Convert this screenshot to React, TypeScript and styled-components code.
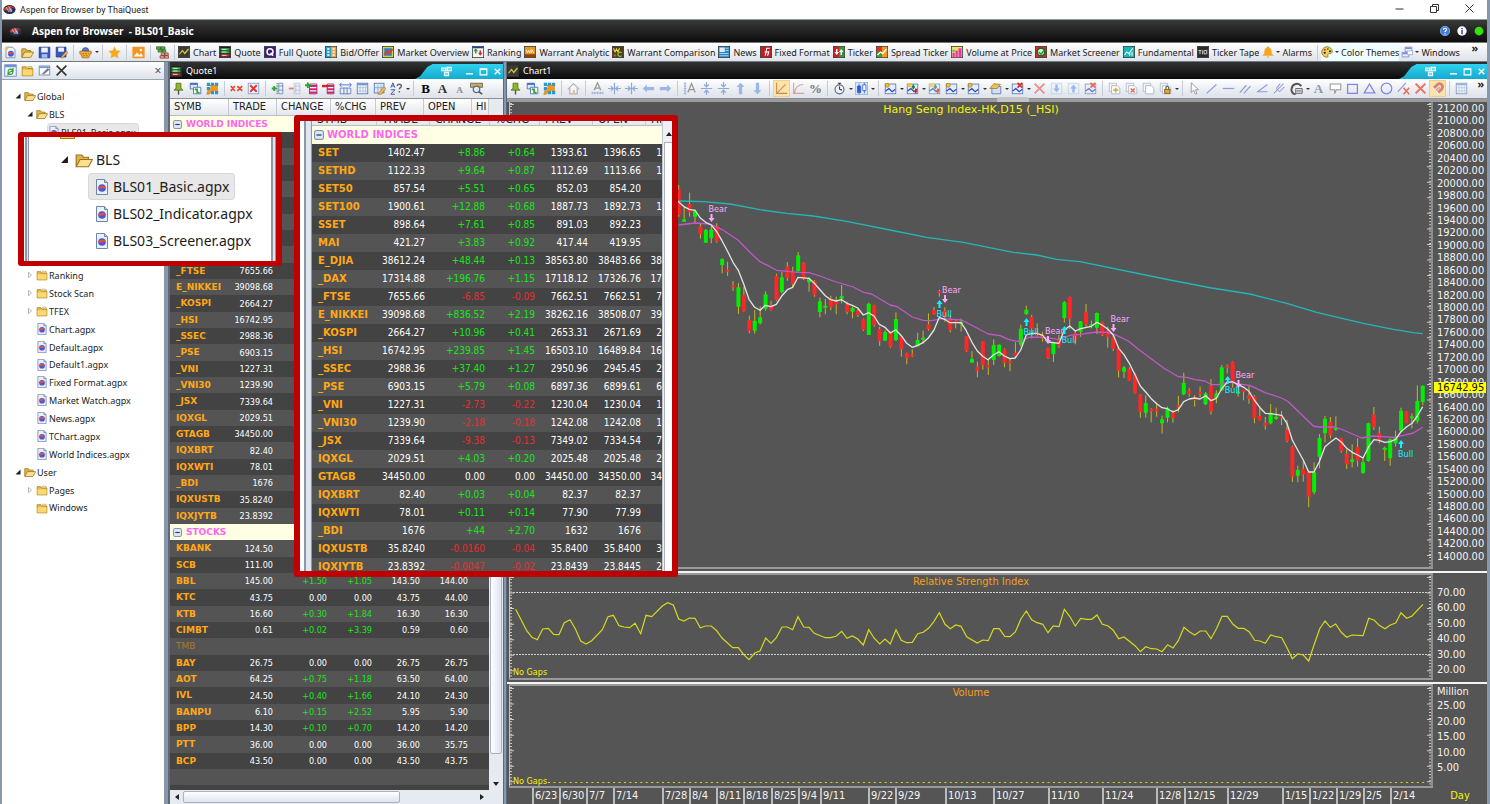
import React from "react";
import styled, { createGlobalStyle, css } from "styled-components";

const UI = `"Noto Sans", "Open Sans", sans-serif`;
const DATA = `"DejaVu Sans Condensed", "DejaVu Sans", sans-serif`;
const WIDE = `"DejaVu Sans", Verdana, sans-serif`;

const Global = createGlobalStyle`
  *, *::before, *::after { box-sizing: border-box; }
  html, body { margin: 0; height: 100%; overflow: hidden; background: #55606e; }
  #root { height: 100%; }
  button { font: inherit; color: inherit; border: 0; padding: 0; background: none; }
  ul { list-style: none; margin: 0; padding: 0; }
`;

/* ---------- icons ---------- */

const tile = (fill: string, body: React.ReactNode) => (
  <>
    <rect x="0.5" y="0.5" width="15" height="15" fill={fill} stroke="#333" />
    {body}
  </>
);

const chartTile = (badge?: React.ReactNode) => (
  <>
    <rect x="1.5" y="2.5" width="13" height="12" fill="#e6eefc" stroke="#5b74a8" />
    <path d="M2 11l4-3 4 4 4-3" fill="none" stroke="#2c46c8" strokeWidth="1.5" />
    {badge}
  </>
);

const pageGear = (badge?: React.ReactNode) => (
  <>
    <rect x="1.5" y="1.5" width="9" height="10" fill="#f2f4f8" stroke="#b4bccb" />
    <path d="M4.500 4.500h7l3 3v7h-10z" fill="#fff" stroke="#a4afc2" />
    {badge}
  </>
);

const glyphs: Record<string, React.ReactNode> = {
  logo: (
    <>
      <ellipse cx="8" cy="8" rx="7.500" ry="5.500" fill="#2a2f45" />
      <path d="M1 8c2-5 11-6 14-1-3-2-5-2-7 0s-5 3-7 1z" fill="#d8432e" />
      <circle cx="9" cy="8.500" r="2.500" fill="#6c8fe0" />
      <path d="M4 5l3 6M7 4l4 7" stroke="#f3d3c8" strokeWidth="0.8" />
    </>
  ),
  page: (
    <>
      <path d="M2.500 0.500h8l3 3v12h-11z" fill="#e9f0fa" stroke="#6d86ad" />
      <path d="M10.500 0.500v3h3" fill="#b8c9e4" stroke="#6d86ad" />
      <circle cx="8" cy="9" r="3.800" fill="#4b55d8" />
      <path d="M3.500 9c2-3 7-3 9 0-3-1-6 2-9 0z" fill="#e2503a" />
    </>
  ),
  folder: (
    <>
      <path d="M1.500 3.500h5l1.500 2h6.500v9h-13z" fill="#e9b93c" stroke="#a87c1b" />
      <path d="M2 7h12v7H2z" fill="#f8d974" />
      <path d="M8.500 3h5v2h-4z" fill="#fff3c4" stroke="#a87c1b" strokeWidth="0.600" />
    </>
  ),
  folderOpen: (
    <>
      <path d="M1 13.500V3.500h5l1.500 2H12v3" fill="#e2b24a" stroke="#9a7420" />
      <path d="M1 14l3.500-6.500H15.500L12 14z" fill="#fbe08c" stroke="#9a7420" />
    </>
  ),
  newPage: (
    <>
      <path d="M2.500 1.500h8l3 3v10h-11z" fill="#f1f6fd" stroke="#6d86ad" />
      <circle cx="8.500" cy="9.500" r="3.600" fill="#4b55d8" />
      <path d="M4.500 9.500c2-3 6-3 8 0-3-1-5 2-8 0z" fill="#e2503a" />
      <circle cx="3" cy="3" r="2" fill="#f6c433" />
    </>
  ),
  save: (
    <>
      <path d="M1.500 1.500h13v13h-13z" fill="#3558c0" stroke="#22378a" />
      <rect x="4" y="2" width="8" height="6" fill="#eef3fb" />
      <rect x="4.500" y="10" width="7" height="4.500" fill="#a9bce8" />
    </>
  ),
  saveAs: (
    <>
      <path d="M1.500 1.500h12v12h-12z" fill="#3558c0" stroke="#22378a" />
      <rect x="4" y="2" width="7" height="5" fill="#eef3fb" />
      <path d="M7 14l7-8 2 2-7 7z" fill="#f5b84a" stroke="#8a5d10" strokeWidth="0.700" />
    </>
  ),
  basket: (
    <>
      <path d="M4 6a4 4 0 018 0z" fill="#5c7fd0" stroke="#2f4b96" />
      <path d="M1 6.500h14v3h-1l-2 5H4l-2-5H1z" fill="#f3b13a" stroke="#a76c10" />
      <path d="M4 9.500h8M5 12h6" stroke="#8c5510" strokeDasharray="2 1.500" />
    </>
  ),
  star: <path d="M8 0.500l2.300 5 5.400 .6-4 3.700 1.100 5.400L8 12.500l-4.800 2.700 1.100-5.400-4-3.700 5.400-.6z" fill="#fba81a" />,
  picture: (
    <>
      <rect x="0.500" y="1" width="15" height="14" fill="#f6951e" />
      <path d="M2 13l4-5 3 3 2-2 3 4z" fill="#fff" />
      <circle cx="11" cy="5" r="1.500" fill="#fff" />
    </>
  ),
  bricks: (
    <>
      <path d="M0.500 1h5v3h-5zM6 1h5v3H6zM2.500 4.500h5v3h-5zM8 4.500h4v3H8z" fill="#5fb04a" stroke="#1f5a18" strokeWidth="0.800" />
      <path d="M6.500 8.500h4v3h-4zM11 8.500h4v3h-4zM5 12h5v3H5zM10.500 12h5v3h-5z" fill="#f0a890" stroke="#6d2a1c" strokeWidth="0.800" />
    </>
  ),
  tChart: tile("#3b3b36", <path d="M2 11l4-5 3 4 5-6" fill="none" stroke="#d7cf38" strokeWidth="1.600" />),
  tQuote: tile(
    "#1d1d1d",
    <>
      <path d="M2 3h12v3H2zM2 7h12v2.500H2z" fill="#35b345" />
      <path d="M2 11h12v3H2z" fill="#c23434" />
      <path d="M4 4.500h6M4 8h6M4 12.500h6" stroke="#fff" />
    </>
  ),
  tFull: tile(
    "#3c1a78",
    <>
      <circle cx="8" cy="7.500" r="4" fill="none" stroke="#fff" strokeWidth="2" />
      <path d="M9 9l3 4" stroke="#fff" strokeWidth="2" />
    </>
  ),
  tBid: tile(
    "#2a9ec0",
    <>
      <path d="M8 1h7v14H8z" fill="#f0a030" />
      <path d="M3 4h3M3 8h3M3 12h3M10 4h3M10 8h3M10 12h3" stroke="#fff" strokeWidth="2" />
    </>
  ),
  tOverview: tile(
    "#b7df3a",
    <>
      <rect x="3" y="3" width="10" height="10" fill="#2f7ed0" />
      <path d="M3 12l4-5 3 3 4-6" stroke="#e83a2a" strokeWidth="2.500" fill="none" />
    </>
  ),
  tRank: tile(
    "#f4f4f4",
    <>
      <path d="M5 3l3 4H6v3H4V7H2z" fill="#1f9e35" />
      <path d="M11 13l3-4h-2V6h-2v3H8z" fill="#d22" />
      <path d="M1 1h14v2H1z" fill="#1d3f94" />
    </>
  ),
  tWA: tile(
    "#e39a1c",
    <>
      <path d="M1 11h14v4H1z" fill="#8f3f10" />
      <path d="M3 5l1.500 4L6 6l1.500 3L9 5M9.500 9.500L11 5l2 4.500" stroke="#fff" fill="none" />
    </>
  ),
  tWC: tile(
    "#4d3a18",
    <>
      <path d="M2 3l2 5 2-4 2 4 2-5" stroke="#f0d03a" strokeWidth="1.500" fill="none" />
      <path d="M13 9c-3-2-5 0-5 2s2 4 5 2" stroke="#6fd04a" strokeWidth="1.700" fill="none" />
      <path d="M2 11h4v3H2z" fill="#d04a2a" />
    </>
  ),
  tNews: tile(
    "#2b86c4",
    <>
      <path d="M2 2h7v6H2z" fill="#fff" opacity="0.85" />
      <path d="M10 3h4M10 6h4M2 10h12M2 13h12" stroke="#cfe8f8" />
    </>
  ),
  tFixed: tile("#c01c22", <path d="M7 13l2-10h4M6 8h5M10 13l2-6" stroke="#fff" strokeWidth="1.500" fill="none" />),
  tTicker: tile(
    "#c8202a",
    <>
      <path d="M8 1h7v14H8z" fill="#2d9a36" />
      <path d="M5 12L2 8h2V4h2v4h2zM11 4l3 4h-2v4h-2V8H8z" fill="#fff" />
    </>
  ),
  tSpread: tile(
    "#e0341c",
    <>
      <path d="M8 1h7v14H8z" fill="#ef9a1e" />
      <path d="M1 8h7v7H1z" fill="#2ca53a" />
      <path d="M2 12l4-4 3 2 5-6" stroke="#fff" strokeWidth="1.800" fill="none" />
    </>
  ),
  tVolume: tile(
    "#f7e04a",
    <>
      <path d="M2 9h3v6H2zM6 6h3v9H6zM10 3h4v12h-4z" fill="#e335b8" />
      <path d="M2 5h3v3H2z" fill="#3fb6e8" />
    </>
  ),
  tScreener: tile(
    "#d22b20",
    <>
      <circle cx="8" cy="8" r="5" fill="#e8f4e8" stroke="#176b22" strokeWidth="2" />
      <path d="M5 8l3 3 4-5" stroke="#1c9a30" strokeWidth="2" fill="none" />
    </>
  ),
  tFund: tile("#18b6b6", <path d="M2 12l3-4 3 2 5-7M9 13v-3M12 13V8" stroke="#fff" strokeWidth="1.400" fill="none" />),
  tTape: tile("#2b2b2b", <path d="M2 6h4M4 6v5M7.500 5.500V11M12 6H9.500v4.500H12M13 5v6" stroke="#ddd" strokeWidth="1.200" fill="none" />),
  bell: <path d="M8 0.500c1 0 1.500.5 1.500 1.500 3 1 3.500 4 3.500 8l2.500 3H.5L3 10c0-4 .5-7 3.500-8C6.500 1 7 .5 8 .5zM6 14h4l-2 2z" fill="#f6a51e" />,
  palette: (
    <>
      <path d="M8 1a7 7 0 100 14c2 0 1-2 1-3s1-2 3-2 3-1 3-3c0-3-3-6-7-6z" fill="#f0d060" stroke="#8a6a18" />
      <circle cx="5" cy="5" r="1.400" fill="#c33" />
      <circle cx="9" cy="4" r="1.400" fill="#2a2" />
      <circle cx="12" cy="7" r="1.300" fill="#222" />
      <circle cx="5" cy="9" r="1.400" fill="#222" />
    </>
  ),
  windowsStack: (
    <>
      <path d="M5.500 1.500h9v6h-9zM1.500 8.500h9v6h-9z" fill="#eaf1fc" stroke="#6b86b8" />
      <path d="M6 2h8v2H6zM2 9h8v2H2z" fill="#6f92d6" />
      <path d="M8.500 6.500h7v5h-7z" fill="#fff" stroke="#8fa5cb" />
    </>
  ),
  refresh: (
    <>
      <rect x="1" y="1" width="14" height="14" fill="#f6faff" stroke="#5c7cb8" />
      <path d="M1 1h14v3H1z" fill="#6f95d8" />
      <path d="M5 9a3 3 0 015-2l1-1v3H8M11 10a3 3 0 01-5 2l-1 1v-3h3" fill="none" stroke="#2c9a2c" strokeWidth="1.500" />
    </>
  ),
  edit: (
    <>
      <rect x="1.500" y="2.500" width="13" height="11" fill="#fff" stroke="#5c7cb8" />
      <path d="M2 3h12v2H2z" fill="#6f95d8" />
      <path d="M5 12l7-7 2 2-7 6z" fill="#777" />
    </>
  ),
  cross: <path d="M2 2l12 12M14 2L2 14" stroke="#333" strokeWidth="2" />,
  pin: (
    <>
      <path d="M5 1.500h6v6l2.500 2.500h-11L5 7.500z" fill="#8fb829" stroke="#4f6e12" />
      <path d="M8 10v5.500" stroke="#555" strokeWidth="1.800" />
    </>
  ),
  cascade: (
    <>
      <path d="M1.500 1.500h9v7h-9z" fill="#dfeafc" stroke="#3f66b8" />
      <path d="M1.500 2.500h9" stroke="#3f66b8" strokeWidth="2" />
      <path d="M5.500 6.500h9v8h-9z" fill="#fff" stroke="#3f66b8" />
      <path d="M7 9h3v4h3" fill="none" stroke="#28a428" strokeWidth="2" />
    </>
  ),
  share: (
    <>
      <path d="M1 1h4v4H1zM6 1h4v4H6zM11 1h4v4h-4zM1 6h4v4H1zM11 11h4v4h-4zM6 11h4v4H6z" fill="#1d9be0" />
      <path d="M1 15c1-5 3-7 6-7L5 4h9v8l-3-2c-3 0-5 2-7 5z" fill="#f59a1c" stroke="#a8660c" strokeWidth="0.600" />
    </>
  ),
  unlink: <path d="M1 5l5 6M6 5l-5 6M9 5l6 6M15 5L9 11" stroke="#e0482e" strokeWidth="2" />,
  clearGrid: (
    <>
      <rect x="1.500" y="1.500" width="13" height="13" fill="#eaf1fc" stroke="#7d9acb" />
      <path d="M4 4l8 8M12 4l-8 8" stroke="#e23a28" strokeWidth="2.400" />
    </>
  ),
  colAdd: (
    <>
      <path d="M9.500 1.500h5v13h-5zM9 5h6M9 10h6" fill="#e5eefb" stroke="#6d86ad" />
      <path d="M1 8h6M4 5v6" stroke="#2ba52b" strokeWidth="2.200" />
      <path d="M7.500 1v14" stroke="#555" strokeDasharray="2 1" />
    </>
  ),
  colDel: (
    <>
      <path d="M9.500 1.500h5v13h-5zM9 5h6M9 10h6" fill="#e5eefb" stroke="#9fb0cc" />
      <path d="M1 8h6" stroke="#e05050" strokeWidth="2.200" />
      <path d="M7.500 1v14" stroke="#999" strokeDasharray="2 1" />
    </>
  ),
  rowAdd: (
    <>
      <path d="M5.500 2.500h9v12h-9z" fill="#fff" stroke="#86224e" />
      <path d="M5 5h10M5 9h10M5 13h10" stroke="#c82878" strokeWidth="2.500" />
      <path d="M0 4h7M3.500 0.500v7" stroke="#2ba52b" strokeWidth="2.400" />
    </>
  ),
  rowDel: (
    <>
      <path d="M6.500 2.500h8v12h-8z" fill="#fff" stroke="#86224e" />
      <path d="M6 5h9M6 9h9M6 13h9" stroke="#c82878" strokeWidth="2.500" />
      <path d="M0 5h8" stroke="#e02020" strokeWidth="3" />
    </>
  ),
  fitCols: (
    <>
      <path d="M1.500 7.500h13v7h-13zM6 7v8M10 7v8" fill="#e5eefb" stroke="#5d7ab2" />
      <path d="M1 3.500h14M3 1L1 3.500 3 6M13 1l2 2.500L13 6" stroke="#3a62c0" fill="none" />
    </>
  ),
  grid: (
    <>
      <rect x="1.500" y="1.500" width="13" height="13" fill="#f2f6fd" stroke="#4f6ea8" />
      <path d="M2 3h12" stroke="#6f95d8" strokeWidth="2" />
      <path d="M5 4v10M8.500 4v10M12 4v10M2 7h12M2 11h12" stroke="#a9bbdc" />
    </>
  ),
  gridEdit: (
    <>
      <rect x="1.500" y="1.500" width="12" height="12" fill="#dce8fb" stroke="#4f6ea8" />
      <path d="M6 4v9M10 4v9M2 7h11" stroke="#88a2d0" />
      <path d="M6 15l7-9 3 2-7 8z" fill="#f5b84a" stroke="#8a5d10" strokeWidth="0.600" />
    </>
  ),
  sort: (
    <>
      <path d="M1 7l2.500-6L6 7M2 5h3M1 9.500h5l-5 5.500h5" stroke="#3b57a8" strokeWidth="1.200" fill="none" />
      <path d="M9 5c0-3 5-3 5 0 0 2-2.500 2-2.500 4M11.500 11v2" stroke="#666" strokeWidth="1.800" fill="none" />
    </>
  ),
  inspect: (
    <>
      <path d="M0.500 1.500h15v5h-15z" fill="#d8a850" stroke="#4f5f5f" />
      <circle cx="8" cy="9" r="4" fill="#d8ecfb" stroke="#666" strokeWidth="1.500" />
      <path d="M11 12l4 3" stroke="#555" strokeWidth="2" />
    </>
  ),
  home: (
    <>
      <path d="M1 9l7-7 7 7M3.500 8v6.500h9V8" fill="#fff" stroke="#999" strokeWidth="1.500" />
      <path d="M7 10h3v4H7z" fill="#e0b070" />
    </>
  ),
  timeAuto: (
    <>
      <path d="M4 10L8 1l4 9M5.500 7.500h5" stroke="#999" strokeWidth="1.600" fill="none" />
      <path d="M1 13.500h14M1.500 12v3M4.500 12v3M8 12v3M11.500 12v3M14.500 12v3" stroke="#8ea9da" />
    </>
  ),
  priceAuto: (
    <>
      <path d="M6 13L10.500 2 15 13M7.500 9.500h6" stroke="#999" strokeWidth="1.600" fill="none" />
      <path d="M2.500 1v14M1 1.500h3M1 5h3M1 8h3M1 11h3M1 14.500h3" stroke="#8ea9da" />
    </>
  ),
  scaleX: <path d="M8 1v14M0 8h6M10 8h6M3.500 5l3 3-3 3M12.500 5l-3 3 3 3" stroke="#8ea9da" strokeWidth="1.500" fill="none" />,
  scaleY: <path d="M1 8h14M8 0v5M8 11v5M5 3l3 3 3-3M5 13l3-3 3 3" stroke="#8ea9da" strokeWidth="1.500" fill="none" />,
  left: <path d="M1 8l5-5v3h9v4H6v3z" fill="#9db6ea" />,
  right: <path d="M15 8l-5-5v3H1v4h9v3z" fill="#9db6ea" />,
  up: <path d="M8 1l5 5h-3v9H6V6H3z" fill="#9db6ea" />,
  down: <path d="M8 15l5-5h-3V1H6v9H3z" fill="#9db6ea" />,
  diag: <path d="M2 1v13h13M3 13L13 3" stroke="#c98a52" strokeWidth="1.300" fill="none" />,
  curve: <path d="M2 1v13h13M3 13C4 7 8 3 14 3" stroke="#dba0a0" strokeWidth="1.300" fill="none" />,
  clock: (
    <>
      <circle cx="8" cy="9" r="5.500" fill="#eef3fa" stroke="#66738c" strokeWidth="1.500" />
      <path d="M8 9V5.500M8 9l3 1M6 1.500h4M8 1v2" stroke="#333" strokeWidth="1.300" />
    </>
  ),
  candles: (
    <>
      <rect x="0.500" y="0.500" width="15" height="15" fill="#dbe8fb" stroke="#9ab4de" />
      <path d="M3 5h4v8H3zM5 2v13" fill="#2f5ed0" stroke="#2f5ed0" />
      <path d="M9.500 3.500h4v7h-4zM11.500 1v2.500M11.500 10.500V14" fill="#fff" stroke="#2f5ed0" />
    </>
  ),
  indAdd: chartTile(<circle cx="4" cy="4" r="2.500" fill="#f2c12e" stroke="#8a6a10" strokeWidth="0.700" />),
  indMark: chartTile(
    <>
      <circle cx="4" cy="4" r="2.500" fill="#f2c12e" />
      <path d="M9 3v6M7 6h4" stroke="#178a28" strokeWidth="2" />
      <path d="M12 8v6M10 11h4" stroke="#d22" strokeWidth="2" />
    </>
  ),
  indDrag: (
    <>
      <path d="M3.500 5.500h11v9h-11z" fill="#cfe0f8" stroke="#5b74a8" />
      <path d="M1 8l5-6 8 1-4 5z" fill="#e9c060" stroke="#8c6a1a" strokeWidth="0.800" />
    </>
  ),
  indDel: chartTile(<path d="M8 1l6 6M14 1L8 7" stroke="#e02a1c" strokeWidth="2" />),
  redX: (
    <>
      <rect x="1" y="2" width="14" height="12" fill="#e8eefa" />
      <path d="M2 2l12 12M14 2L2 14" stroke="#ea6a5a" strokeWidth="2.200" />
    </>
  ),
  boxDown: (
    <>
      <rect x="1.500" y="1.500" width="13" height="13" fill="#eaf1fc" stroke="#b3c6e8" />
      <path d="M8 13l4-5H9.500V3h-3v5H4z" fill="#7b9fe6" />
    </>
  ),
  boxUp: (
    <>
      <rect x="1.500" y="1.500" width="13" height="13" fill="#eaf1fc" stroke="#b3c6e8" />
      <path d="M8 3l4 5H9.500v5h-3V8H4z" fill="#7b9fe6" />
    </>
  ),
  pagesAdd: pageGear(<path d="M9.500 7v6M6.500 10h6" stroke="#c9b63c" strokeWidth="2.200" />),
  pagesDel: pageGear(<path d="M7 8l5 5M12 8l-5 5" stroke="#e66a5a" strokeWidth="1.800" />),
  pages: pageGear(),
  pagesLock: pageGear(
    <>
      <rect x="7" y="9" width="6.500" height="5" fill="#e8a824" stroke="#7a5608" />
      <path d="M8.500 9V7c0-2 3.500-2 3.500 0v2" fill="none" stroke="#555" strokeWidth="1.300" />
    </>
  ),
  cursor: <path d="M4 1v12l3-3 2 5 2-1-2-4.500h4z" fill="#fff" stroke="#8a8a8a" />,
  line: <path d="M2 14L14 3" stroke="#8f9ce0" strokeWidth="1.500" />,
  hline: <path d="M1 8h14" stroke="#8f9ce0" strokeWidth="1.500" />,
  parallel: <path d="M1 13l8-9M6 14l8-9" stroke="#8f9ce0" strokeWidth="1.500" />,
  angle: <path d="M14 3L2 12h12" stroke="#8f9ce0" strokeWidth="1.500" fill="none" />,
  pitchfork: <path d="M1 14L13 2M4 8l5-6M8 12l6-6M4 8l4 4" stroke="#9a9fd8" strokeWidth="1.300" fill="none" />,
  fib: (
    <>
      <path d="M14 5c-4-5-11-3-12 3-1 4 2 7 5 7" stroke="#555" strokeWidth="2.500" fill="none" />
      <path d="M7 8h8v6H7zM8 11h6" fill="#ddd" stroke="#555" />
    </>
  ),
  bubble: <path d="M1.500 2.500h13v7H9l-2 5v-5H1.500z" fill="#fff" stroke="#999" strokeWidth="1.300" />,
  square: <rect x="2" y="3" width="12" height="11" fill="none" stroke="#8088e0" strokeWidth="1.600" />,
  triangle: <path d="M8 2.500l6.500 11h-13z" fill="none" stroke="#8088e0" strokeWidth="1.600" />,
  circle: <circle cx="8" cy="8" r="6.500" fill="none" stroke="#8088e0" strokeWidth="1.500" />,
  lineDel: (
    <>
      <path d="M1 12L11 1" stroke="#9aa0dc" strokeWidth="1.500" />
      <path d="M8 7l7 8M15 7l-7 8" stroke="#ea6a5a" strokeWidth="1.800" />
    </>
  ),
  cross2: <path d="M2 2l12 12M14 2L2 14" stroke="#ea7060" strokeWidth="2.500" />,
  magnet: (
    <>
      <path d="M3 8l5-5c4-3 8 2 5 6l-5 5" fill="none" stroke="#d88080" strokeWidth="3.400" />
      <path d="M6 10l3-3c1-1 2 0 1 1l-3 3" fill="none" stroke="#b86a6a" strokeWidth="0.800" />
      <path d="M1.500 6.500l3 3M6.500 12l3 3" stroke="#eef" strokeWidth="2" />
    </>
  ),
  dock: <path d="M1 3h6v4H1zM9 2h6v5H9zM5 9h6v5H5z" fill="#6fdcf0" stroke="#fff" strokeWidth="1.600" />,
  minimize: <path d="M2 12h12" stroke="#fff" strokeWidth="3" />,
  maximize: <path d="M2 3h12v11H2zM2 4.500h12" fill="none" stroke="#fff" strokeWidth="2" />,
  closeWhite: <path d="M3 3l10 10M13 3L3 13" stroke="#fff" strokeWidth="2.500" />,
  help: (
    <>
      <circle cx="8" cy="8" r="7.500" fill="#3f7fe0" stroke="#bcd4f8" />
      <path d="M5.500 6c0-3.500 5-3 5-.3 0 2-2.500 1.800-2.500 4M8 11.500v2" stroke="#fff" strokeWidth="1.800" fill="none" />
    </>
  ),
  info: (
    <>
      <circle cx="8" cy="8" r="7.500" fill="#fff" />
      <path d="M8 3v2M8 6.500V13" stroke="#2a50c8" strokeWidth="2.500" />
    </>
  ),
  online: <circle cx="8" cy="8" r="7" fill="#35e20c" />,
  minusBox: (
    <>
      <rect x="1" y="1" width="14" height="14" rx="2" fill="#dfe8f5" stroke="#6e86b0" strokeWidth="1.600" />
      <path d="M4 8h8" stroke="#22386c" strokeWidth="2" />
    </>
  ),
  expanded: <path d="M13 3v10H3z" fill="#1c1c1c" />,
  collapsed: <path d="M5 3l6 5-6 5z" fill="#fff" stroke="#999" strokeWidth="1.400" />,
};

const Svg = styled.svg`
  display: block;
  flex: none;
`;

const Icon = ({ name, size = 12 }: { name: string; size?: number }) => (
  <Svg width={size} height={size} viewBox="0 0 16 16" aria-hidden="true">
    {glyphs[name]}
  </Svg>
);

/* ---------- frame ---------- */

const Frame = styled.div`
  position: relative;
  height: 100vh;
  padding: 0 3px 0 2px;
  display: flex;
  flex-direction: column;
  background: #8797ad;
  font-family: ${UI};
  font-size: 9px;
  color: #1c1c1c;
  overflow: hidden;
`;

const SystemBar = styled.header`
  height: 20px;
  flex: none;
  display: flex;
  align-items: center;
  gap: 4px;
  padding-left: 1px;
  background: #fff;
  border-bottom: 1px solid #8f9c9c;
  font-family: Roboto, sans-serif;
`;

const SystemButtons = styled.div`
  margin-left: auto;
  display: flex;
  align-self: flex-start;
`;

const SystemButton = styled.button`
  width: 35px;
  height: 17px;
  display: flex;
  align-items: center;
  justify-content: center;
`;

const BrandBar = styled.div`
  height: 22px;
  flex: none;
  display: flex;
  align-items: center;
  gap: 10px;
  padding: 0 3px 0 7px;
  background: linear-gradient(#3a3a3a, #0c0c0c);
  color: #fff;
  font-size: 10px;
  font-weight: 700;
  white-space: pre;
`;

const BrandStatus = styled.div`
  margin-left: auto;
  display: flex;
  gap: 7px;
  align-items: center;
`;

const barFill = css`
  background: linear-gradient(#ffffff, #e9ecf1 60%, #dfe3ea);
`;

const MainBar = styled.nav`
  height: 20px;
  flex: none;
  display: flex;
  align-items: center;
  border-top: 1px solid #777;
  border-bottom: 1px solid #6f7780;
  ${barFill}
`;

const Divider = styled.span`
  width: 1px;
  height: 15px;
  flex: none;
  margin: 0 3px;
  background: #c6cad1;
`;

const ToolButton = styled.button<{ $menu?: boolean; $faded?: boolean; $on?: boolean }>`
  width: ${(p) => (p.$menu ? 22 : 17)}px;
  height: 17px;
  flex: none;
  display: flex;
  align-items: center;
  gap: 3px;
  padding-left: 2px;
  opacity: ${(p) => (p.$faded ? 0.7 : 1)};
  ${(p) => p.$on && css`background: #fbe3a9; box-shadow: inset 0 0 0 1px #f0cf8a;`}
`;

const Caret = styled.span`
  flex: none;
  border: 2px solid transparent;
  border-top-color: #333;
  border-bottom-width: 0;
`;

const Launch = styled.button<{ $menu?: boolean; $lit?: boolean }>`
  height: 17px;
  flex: none;
  display: flex;
  align-items: center;
  gap: ${(p) => (p.$menu ? 2 : 3)}px;
  margin-right: ${(p) => (p.$menu ? 2 : 3)}px;
  white-space: nowrap;
  ${(p) => p.$lit && css`background: #effcfd;`}
`;

const Overflow = styled.button<{ $wide?: boolean }>`
  margin-left: auto;
  width: ${(p) => (p.$wide ? 26 : 12)}px;
  flex: none;
  align-self: flex-start;
  line-height: 10px;
  font-size: 11px;
  font-weight: 700;
`;

const LetterIcon = styled.span<{ $tone?: string }>`
  width: 13px;
  text-align: center;
  font-family: "Liberation Serif", serif;
  font-size: 13px;
  line-height: 13px;
  font-weight: 700;
  color: ${(p) => p.$tone ?? "#333"};
`;

const Workspace = styled.main`
  flex: 1;
  min-height: 0;
  display: flex;
`;

/* ---------- tools ---------- */

type Tool = { icon?: string; label: string; text?: string; tone?: string; menu?: boolean; faded?: boolean; on?: boolean } | "|";

const Tools = ({ items }: { items: Tool[] }) => (
  <>
    {items.map((t, i) =>
      t === "|" ? (
        <Divider key={i} />
      ) : (
        <ToolButton key={i} aria-label={t.label} $menu={t.menu} $faded={t.faded} $on={t.on}>
          {t.icon ? <Icon name={t.icon} size={13} /> : <LetterIcon $tone={t.tone}>{t.text}</LetterIcon>}
          {t.menu && <Caret />}
        </ToolButton>
      )
    )}
  </>
);

const fileTools: Tool[] = [
  { icon: "newPage", label: "New page" },
  { icon: "folderOpen", label: "Open page" },
  { icon: "save", label: "Save" },
  { icon: "saveAs", label: "Save as" },
  "|",
  { icon: "basket", label: "Print", menu: true },
  "|",
  { icon: "star", label: "Favourite" },
  "|",
  { icon: "picture", label: "Snapshot" },
  "|",
  { icon: "bricks", label: "Arrange" },
  "|",
];

const launchers: [string, string][] = [
  ["tChart", "Chart"],
  ["tQuote", "Quote"],
  ["tFull", "Full Quote"],
  ["tBid", "Bid/Offer"],
  ["tOverview", "Market Overview"],
  ["tRank", "Ranking"],
  ["tWA", "Warrant Analytic"],
  ["tWC", "Warrant Comparison"],
  ["tNews", "News"],
  ["tFixed", "Fixed Format"],
  ["tTicker", "Ticker"],
  ["tSpread", "Spread Ticker"],
  ["tVolume", "Volume at Price"],
  ["tScreener", "Market Screener"],
  ["tFund", "Fundamental"],
  ["tTape", "Ticker Tape"],
];

const windowTools: Tool[] = [
  { icon: "pin", label: "Pin" },
  { icon: "cascade", label: "Link windows" },
  { icon: "share", label: "Export" },
  "|",
];

const quoteTools: Tool[] = [
  ...windowTools,
  { icon: "unlink", label: "Unlink" },
  { icon: "clearGrid", label: "Clear grid" },
  "|",
  { icon: "colAdd", label: "Insert column" },
  { icon: "colDel", label: "Delete column", faded: true },
  { icon: "rowAdd", label: "Insert row" },
  { icon: "rowDel", label: "Delete row" },
  { icon: "fitCols", label: "Fit columns" },
  { icon: "grid", label: "Grid" },
  { icon: "gridEdit", label: "Edit grid" },
  { icon: "sort", label: "Sort", menu: true },
  "|",
  { text: "B", label: "Bold", tone: "#000" },
  { text: "A", label: "Larger text" },
  { text: "ᴀ", label: "Smaller text", tone: "#999" },
  { icon: "inspect", label: "Find" },
];

const chartTools: Tool[] = [
  ...windowTools,
  { icon: "home", label: "Home", faded: true },
  "|",
  { icon: "timeAuto", label: "Auto scale time" },
  { icon: "scaleX", label: "Expand time" },
  { icon: "scaleX", label: "Shrink time" },
  { icon: "left", label: "Scroll left" },
  { icon: "right", label: "Scroll right" },
  "|",
  { icon: "priceAuto", label: "Auto scale price" },
  { icon: "scaleY", label: "Expand price" },
  { icon: "scaleY", label: "Shrink price" },
  { icon: "up", label: "Scroll up" },
  { icon: "down", label: "Scroll down" },
  "|",
  { icon: "diag", label: "Linear scale", on: true },
  { icon: "curve", label: "Log scale" },
  { text: "%", label: "Percent scale", tone: "#777" },
  "|",
  { icon: "clock", label: "Period", menu: true },
  { icon: "candles", label: "Chart style", menu: true },
  "|",
  { icon: "indAdd", label: "Add indicator", menu: true },
  { icon: "indMark", label: "Add signal", menu: true },
  { icon: "indMark", label: "Edit signal", faded: true },
  { icon: "indAdd", label: "Indicator template", menu: true },
  { icon: "indAdd", label: "Saved indicators", menu: true },
  { icon: "indDrag", label: "Load template", menu: true },
  { icon: "indDel", label: "Remove indicator", menu: true },
  { icon: "redX", label: "Delete pane", faded: true },
  { icon: "boxDown", label: "Move pane down", faded: true },
  { icon: "boxUp", label: "Move pane up", faded: true },
  { icon: "indDel", label: "Remove overlay", faded: true },
  "|",
  { icon: "pagesAdd", label: "Add page" },
  { icon: "pagesDel", label: "Delete page" },
  { icon: "pages", label: "Copy page" },
  { icon: "pagesLock", label: "Lock page", menu: true },
  "|",
  { icon: "cursor", label: "Select" },
  { icon: "line", label: "Trend line" },
  { icon: "hline", label: "Horizontal line" },
  { icon: "parallel", label: "Parallel lines" },
  { icon: "angle", label: "Angle" },
  { icon: "pitchfork", label: "Pitchfork" },
  { icon: "fib", label: "Fibonacci", menu: true },
  { text: "A", label: "Text", tone: "#8c9ab4" },
  { icon: "bubble", label: "Callout" },
  { icon: "square", label: "Rectangle" },
  { icon: "triangle", label: "Triangle" },
  { icon: "circle", label: "Ellipse" },
  { icon: "lineDel", label: "Delete line" },
  { icon: "cross2", label: "Delete all drawings" },
  { icon: "magnet", label: "Magnet", on: true },
  "|",
  { icon: "grid", label: "Data table", faded: true },
];

/* ---------- tree ---------- */

const Sidebar = styled.aside`
  width: 163px;
  flex: none;
  display: flex;
  flex-direction: column;
  border-right: 1px solid #8b94a3;
  background: #fff;
`;

const SidebarBar = styled.div`
  height: 18px;
  flex: none;
  display: flex;
  align-items: center;
  border-bottom: 1px solid #9aa4b3;
  ${barFill}
`;

const SidebarClose = styled.button`
  margin-left: auto;
  width: 10px;
  margin-right: 1px;
  font-size: 12px;
  line-height: 12px;
  color: #555;
`;

const Tree = styled.ul`
  padding: 7px 0 0 10px;
`;

const TreeRow = styled.li<{ $level: number }>`
  height: 18px;
  display: flex;
  align-items: center;
  padding-left: ${(p) => p.$level * 12}px;
  &:nth-child(8n) { height: 17px; }
`;

const Twist = styled.span`
  width: 12px;
  display: flex;
  justify-content: center;
`;

const TreeLabel = styled.span<{ $picked?: boolean; $big?: boolean }>`
  display: flex;
  align-items: center;
  gap: ${(p) => (p.$big ? 3 : 1)}px;
  height: ${(p) => (p.$big ? 25 : 17)}px;
  padding-right: 2px;
  border-radius: 3px;
  white-space: nowrap;
  ${(p) => p.$picked && css`background: #e8e8e8; box-shadow: 0 0 0 1px #d8d8d8;`}
  ${(p) => p.$picked && p.$big && css`margin-left: -5px; padding: 0 5px;`}
`;

type Node = { level: number; kind: "folder" | "folderOpen" | "page"; label: string; twist?: "expanded" | "collapsed"; picked?: boolean };

const treeTop: Node[] = [
  { level: 0, kind: "folderOpen", label: "Global", twist: "expanded" },
  { level: 1, kind: "folderOpen", label: "BLS", twist: "expanded" },
  { level: 2, kind: "page", label: "BLS01_Basic.agpx", picked: true },
];

const treeRest: Node[] = [
  { level: 1, kind: "folder", label: "Ranking", twist: "collapsed" },
  { level: 1, kind: "folder", label: "Stock Scan", twist: "collapsed" },
  { level: 1, kind: "folder", label: "TFEX", twist: "collapsed" },
  { level: 1, kind: "page", label: "Chart.agpx" },
  { level: 1, kind: "page", label: "Default.agpx" },
  { level: 1, kind: "page", label: "Default1.agpx" },
  { level: 1, kind: "page", label: "Fixed Format.agpx" },
  { level: 1, kind: "page", label: "Market Watch.agpx" },
  { level: 1, kind: "page", label: "News.agpx" },
  { level: 1, kind: "page", label: "TChart.agpx" },
  { level: 1, kind: "page", label: "World Indices.agpx" },
  { level: 0, kind: "folderOpen", label: "User", twist: "expanded" },
  { level: 1, kind: "folder", label: "Pages", twist: "collapsed" },
  { level: 1, kind: "folder", label: "Windows" },
];

const TreeItem = ({ node }: { node: Node }) => (
  <TreeRow $level={node.level}>
    <Twist>{node.twist && <Icon name={node.twist} size={8} />}</Twist>
    <TreeLabel $picked={node.picked}>
      <Icon name={node.kind} size={12} />
      {node.label}
    </TreeLabel>
  </TreeRow>
);

/* ---------- tool windows ---------- */

const ToolWindow = styled.section<{ $fill?: boolean }>`
  ${(p) => (p.$fill ? "flex: 1; min-width: 0;" : "width: 336px; flex: none;")}
  display: flex;
  flex-direction: column;
  margin-left: ${(p) => (p.$fill ? 2 : 3)}px;
  border-left: ${(p) => (p.$fill ? 1 : 2)}px solid #5d6878;
  border-right: ${(p) => (p.$fill ? 0 : 1)}px solid #5d6878;
`;

const WindowTitle = styled.div`
  height: 17px;
  flex: none;
  display: flex;
  align-items: center;
  gap: 4px;
  background: linear-gradient(#333, #0a0a0a);
  color: #fff;
`;

const WindowTab = styled.div`
  margin-left: auto;
  width: 88px;
  height: 15px;
  align-self: flex-end;
  display: flex;
  align-items: center;
  justify-content: flex-end;
  gap: 5px;
  padding-right: 1px;
  background: linear-gradient(#2fd3ee, #15a9cf);
  clip-path: polygon(20% 0, 100% 0, 100% 100%, 0 100%, 6% 80%, 14% 20%);
`;

const WindowButton = styled.button<{ $wide?: boolean }>`
  width: ${(p) => (p.$wide ? 19 : 9)}px;
`;

const WindowTools = styled.div`
  height: 20px;
  flex: none;
  display: flex;
  align-items: center;
  border-bottom: 1px solid #8b8f96;
  ${barFill}
`;

const TitleRow = ({ icon, name }: { icon: string; name: string }) => (
  <WindowTitle>
    <Icon name={icon} />
    {name}
    <WindowTab>
      <WindowButton $wide aria-label="Dock"><Icon name="dock" size={11} /></WindowButton>
      <WindowButton aria-label="Minimize"><Icon name="minimize" size={9} /></WindowButton>
      <WindowButton aria-label="Maximize"><Icon name="maximize" size={9} /></WindowButton>
      <WindowButton aria-label="Close"><Icon name="closeWhite" size={9} /></WindowButton>
    </WindowTab>
  </WindowTitle>
);

/* ---------- quotes ---------- */

type Quote = [sym: string, trade: string, chg: string, pct: string, prev: string, open: string, hi: string];

const indices: Quote[] = [
  ["SET", "1402.47", "+8.86", "+0.64", "1393.61", "1396.65", "1"],
  ["SETHD", "1122.33", "+9.64", "+0.87", "1112.69", "1113.66", "1"],
  ["SET50", "857.54", "+5.51", "+0.65", "852.03", "854.20", ""],
  ["SET100", "1900.61", "+12.88", "+0.68", "1887.73", "1892.73", "1"],
  ["SSET", "898.64", "+7.61", "+0.85", "891.03", "892.23", ""],
  ["MAI", "421.27", "+3.83", "+0.92", "417.44", "419.95", ""],
  ["E_DJIA", "38612.24", "+48.44", "+0.13", "38563.80", "38483.66", "38"],
  ["_DAX", "17314.88", "+196.76", "+1.15", "17118.12", "17326.76", "17"],
  ["_FTSE", "7655.66", "-6.85", "-0.09", "7662.51", "7662.51", "7"],
  ["E_NIKKEI", "39098.68", "+836.52", "+2.19", "38262.16", "38508.07", "39"],
  ["_KOSPI", "2664.27", "+10.96", "+0.41", "2653.31", "2671.69", "2"],
  ["_HSI", "16742.95", "+239.85", "+1.45", "16503.10", "16489.84", "16"],
  ["_SSEC", "2988.36", "+37.40", "+1.27", "2950.96", "2945.45", "2"],
  ["_PSE", "6903.15", "+5.79", "+0.08", "6897.36", "6899.61", "6"],
  ["_VNI", "1227.31", "-2.73", "-0.22", "1230.04", "1230.04", "1"],
  ["_VNI30", "1239.90", "-2.18", "-0.18", "1242.08", "1242.08", "1"],
  ["_JSX", "7339.64", "-9.38", "-0.13", "7349.02", "7334.54", "7"],
  ["IQXGL", "2029.51", "+4.03", "+0.20", "2025.48", "2025.48", "2"],
  ["GTAGB", "34450.00", "0.00", "0.00", "34450.00", "34350.00", "34"],
  ["IQXBRT", "82.40", "+0.03", "+0.04", "82.37", "82.37", ""],
  ["IQXWTI", "78.01", "+0.11", "+0.14", "77.90", "77.99", ""],
  ["_BDI", "1676", "+44", "+2.70", "1632", "1676", ""],
  ["IQXUSTB", "35.8240", "-0.0160", "-0.04", "35.8400", "35.8400", "3"],
  ["IQXJYTB", "23.8392", "-0.0047", "-0.02", "23.8439", "23.8445", "2"],
];

/* the magnified panel lies over the first eight rows and over all but two columns of the rest */
const indicesBehind: Quote[] = indices.map((q, i) => (i < 8 ? ["", "", "", "", "", "", ""] : [q[0], q[1], "", "", "", "", ""]));

const stocks: Quote[] = [
  ["KBANK", "124.50", "", "", "", "", ""],
  ["SCB", "111.00", "", "", "", "", ""],
  ["BBL", "145.00", "+1.50", "+1.05", "143.50", "144.00", ""],
  ["KTC", "43.75", "0.00", "0.00", "43.75", "44.00", ""],
  ["KTB", "16.60", "+0.30", "+1.84", "16.30", "16.30", ""],
  ["CIMBT", "0.61", "+0.02", "+3.39", "0.59", "0.60", ""],
  ["TMB", "", "", "", "", "", ""],
  ["BAY", "26.75", "0.00", "0.00", "26.75", "26.75", ""],
  ["AOT", "64.25", "+0.75", "+1.18", "63.50", "64.00", ""],
  ["IVL", "24.50", "+0.40", "+1.66", "24.10", "24.30", ""],
  ["BANPU", "6.10", "+0.15", "+2.52", "5.95", "5.90", ""],
  ["BPP", "14.30", "+0.10", "+0.70", "14.20", "14.20", ""],
  ["PTT", "36.00", "0.00", "0.00", "36.00", "35.75", ""],
  ["BCP", "43.50", "0.00", "0.00", "43.50", "43.75", ""],
  ["", "", "", "", "", "", ""],
  ["", "", "", "", "", "", ""],
];

const headers = ["SYMB", "TRADE", "CHANGE", "%CHG", "PREV", "OPEN", "HI"];

const Grid = styled.table<{ $big?: boolean }>`
  width: 100%;
  table-layout: fixed;
  border-collapse: separate;
  border-spacing: 0;
  font-family: ${DATA};
  font-size: ${(p) => (p.$big ? 10 : 9)}px;
  line-height: 12px;
  color: #fff;
  th, td { padding: 0; overflow: hidden; white-space: nowrap; }
  tbody tr { height: ${(p) => (p.$big ? 18 : 16)}px; }
  ${(p) => !p.$big && css`tbody tr:nth-child(3n) { height: 17px; }`}
  tbody tr:nth-child(even) { background: #434343; }
  tbody tr:nth-child(odd) { background: #545454; }
`;

const HeadCell = styled.th<{ $big?: boolean }>`
  height: ${(p) => (p.$big ? 19 : 17)}px;
  && { padding-left: ${(p) => (p.$big ? 5 : 4)}px; }
  font-size: ${(p) => (p.$big ? 12 : 11)}px;
  font-weight: 400;
  text-align: left;
  vertical-align: ${(p) => (p.$big ? "bottom" : "middle")};
  color: #222;
  background: linear-gradient(#fff, #e4e7ec);
  border-right: 1px solid #c5c9d0;
  border-bottom: 1px solid #b9bdc4;
`;

const GroupCell = styled.td<{ $big?: boolean }>`
  background: #feffe3;
  color: #ff66f0;
  font-family: ${WIDE};
  font-weight: 700;
  button { display: flex; align-items: center; gap: ${(p) => (p.$big ? 3 : 4)}px; margin-left: ${(p) => (p.$big ? 2 : 3)}px; }
`;

const SymbolCell = styled.th<{ $dim?: boolean }>`
  && { padding: 0 0 1px 6px; }
  text-align: left;
  font-family: ${WIDE};
  font-weight: ${(p) => (p.$dim ? 400 : 700)};
  color: ${(p) => (p.$dim ? "#a97a30" : "#ffa816")};
`;

const NumberCell = styled.td<{ $tone: string; $big?: boolean; $cut?: boolean }>`
  text-align: right;
  color: ${(p) => p.$tone};
  && { padding-right: ${(p) => (p.$cut ? 0 : p.$big ? 5 : 4)}px; }
`;

const toneOf = (v: string) => (v[0] === "+" ? "#19e619" : v[0] === "-" ? "#e23030" : "#fff");

const QuoteGrid = ({ big, widths, groups }: { big?: boolean; widths: number[]; groups: [string, Quote[]][] }) => (
  <Grid $big={big}>
    <colgroup>
      {widths.map((w, i) => (
        <col key={i} width={w} />
      ))}
    </colgroup>
    <thead>
      <tr>
        {headers.map((h) => (
          <HeadCell key={h} $big={big} scope="col">{h}</HeadCell>
        ))}
      </tr>
    </thead>
    <tbody>
      {groups.map(([name, rows]) => (
        <React.Fragment key={name}>
          <tr>
            <GroupCell colSpan={7} $big={big}>
              <button aria-expanded="true">
                <Icon name="minusBox" size={big ? 10 : 9} />
                {name}
              </button>
            </GroupCell>
          </tr>
          {rows.map((r, i) => (
            <tr key={i}>
              <SymbolCell scope="row" $dim={r[0] === "TMB"}>{r[0]}</SymbolCell>
              {r.slice(1).map((v, c) => (
                <NumberCell key={c} $big={big} $cut={c === 5} $tone={toneOf(v)}>{v}</NumberCell>
              ))}
            </tr>
          ))}
        </React.Fragment>
      ))}
    </tbody>
  </Grid>
);

const QuoteBody = styled.div`
  flex: 1;
  min-height: 0;
  display: grid;
  grid-template: minmax(0, 1fr) 14px / minmax(0, 1fr) 14px;
  background: #434343;
`;

const Clip = styled.div`
  overflow: hidden;
`;

const Track = styled.div<{ $across?: boolean }>`
  display: flex;
  flex-direction: ${(p) => (p.$across ? "row" : "column")};
  align-items: center;
  justify-content: space-between;
  padding: ${(p) => (p.$across ? "0 4px" : "0 0 4px")};
  background: #e6eaf1;
`;

const Thumb = styled.div<{ $across?: boolean }>`
  flex: ${(p) => (p.$across ? "0 1 217px" : "1")};
  ${(p) => (p.$across ? "height: 12px; margin: 0 auto 0 3px;" : "width: 12px; margin: 16px 0 28px;")}
  border: 1px solid #aab2c0;
  border-radius: 2px;
  background: linear-gradient(${(p) => (p.$across ? "180deg" : "90deg")}, #fff, #dde3ee);
`;

const Arrow = styled.span<{ $turn: number }>`
  border: 3px solid transparent;
  border-top: 4px solid #222;
  border-bottom: 0;
  rotate: ${(p) => p.$turn}deg;
`;

/* ---------- chart ---------- */

const ChartBody = styled.div`
  position: relative;
  flex: 1;
  min-height: 0;
  display: flex;
  flex-direction: column;
  background: #555;
  border-top: 3px solid #9b9b9b;
  font-family: ${DATA};
  font-size: 11px;
  color: #f4f4f4;
`;

const Grip = styled.span`
  position: absolute;
  top: -5px;
  left: 50%;
  width: 32px;
  height: 5px;
  border-radius: 3px 3px 0 0;
  background: #c3c3c3;
`;

const Pane = styled.div<{ $height?: number }>`
  ${(p) => (p.$height ? `height: ${p.$height}px; flex: none;` : "flex: 1; min-height: 0;")}
  display: grid;
  grid-template-columns: minmax(0, 1fr) 54px;
  padding-left: 2px;
`;

const Gutter = styled.div`
  height: 2px;
  flex: none;
  background: #f4f4f4;
`;

const Plot = styled.div<{ $first?: boolean; $last?: boolean }>`
  position: relative;
  min-height: 0;
  border-top: ${(p) => (p.$first ? 0 : 2)}px solid #999;
  border-bottom: 2px solid #999;
  margin-bottom: ${(p) => (p.$last ? 0 : 2)}px;
`;

const Canvas = styled.svg`
  display: block;
  width: 100%;
  height: 100%;
`;

const PlotTitle = styled.h2<{ $main?: boolean }>`
  position: absolute;
  top: ${(p) => (p.$main ? 1 : 0)}px;
  left: 0;
  right: 0;
  margin: 0;
  text-align: center;
  font-family: ${(p) => (p.$main ? WIDE : DATA)};
  font-size: 11px;
  line-height: 13px;
  font-weight: 400;
  color: ${(p) => (p.$main ? "#f2f20a" : "#f5a01a")};
`;

const GapNote = styled.span<{ $low?: boolean }>`
  position: absolute;
  left: 4px;
  bottom: ${(p) => (p.$low ? -1 : 0)}px;
  font-size: 9px;
  line-height: 11px;
  color: #f2f20a;
`;

const Axis = styled.div<{ $pad: string }>`
  position: relative;
  min-height: 0;
  display: flex;
  flex-direction: column;
  justify-content: space-between;
  padding: ${(p) => p.$pad};
  line-height: 12px;
`;

const AxisGroup = styled.div`
  flex: 1;
  display: flex;
  flex-direction: column;
  justify-content: space-between;
  margin-top: 2px;
`;

const LastPrice = styled.output`
  position: absolute;
  top: 60%;
  left: 1px;
  right: 1px;
  margin-top: -1px;
  height: 11px;
  line-height: 11px;
  padding-left: 3px;
  background: #ffff00;
  color: #111;
`;

const DateAxis = styled.div`
  height: 16px;
  flex: none;
  display: grid;
  grid-template-columns: minmax(0, 1fr) 54px;
  padding-left: 2px;
  line-height: 15px;
`;

const Dates = styled.div`
  display: flex;
  min-width: 0;
`;

const DateMark = styled.span<{ $span: number; $blank?: boolean }>`
  flex: ${(p) => p.$span} 1 0;
  width: 0;
  min-width: 0;
  white-space: nowrap;
  ${(p) => !p.$blank && css`box-shadow: inset 2px 0 #bbb; text-indent: 3px;`}
`;

const DayLabel = styled.span`
  text-align: center;
  color: #f2f20a;
`;

type Bar = [high: number, low: number, top: number, bottom: number, up: 0 | 1];

/* prices are held in thirds of a chart unit, measured down from each block's base */
const barsA: Bar[] = [
  [15,110,28,105,0],[80,125,118,125,1],[38,110,72,97,0],[88,130,93,110,1],[130,176,139,163,0],[147,188,150,188,1],
  [138,190,149,175,1],[130,188,137,184,0],[235,280,237,255,1],[245,288,269,275,0],[303,333,316,322,0],[309,402,322,380,1],
  [320,395,345,394,0],[407,460,420,454,0],[390,461,422,452,1],[380,433,412,430,1],[334,392,343,386,1],[362,392,376,391,0],
  [281,362,287,360,0],[275,340,292,336,1],[246,303,260,294,0],[260,323,276,313,0],[216,275,226,274,1],[247,300,248,297,0],
  [292,335,297,307,1],[300,350,302,346,0],[353,412,364,396,1],[357,403,377,382,1],[347,391,357,382,0],[350,403,364,374,0],
  [315,370,348,356,1],[365,403,373,396,0],[380,415,384,395,1],[387,411,392,405,0],[416,453,418,449,0],[368,465,371,465,1],
  [374,440,375,436,0],[440,498,447,483,0],[450,483,456,482,1],[455,503,457,500,0],[397,483,417,480,1],[467,530,470,508,0],
  [518,553,520,535,0],[508,531,523,529,0],[458,500,480,499,1],[452,490,473,479,1],[400,452,433,448,0],[381,405,390,404,0],
  [329,350,334,340,0],[382,425,392,412,0],[405,457,420,451,0],[418,445,423,429,0],[416,455,426,432,1],[468,516,469,514,0],
  [513,548,537,548,1],[545,592,560,572,0],[484,569,484,556,0],[537,585,555,562,0],[478,555,495,540,1],[493,530,494,528,1],
  [505,562,508,549,0],[535,574,544,550,0],[487,535,518,528,0],[434,500,446,494,1],[377,405,389,402,1],[405,475,411,445,0],
  [430,470,458,466,0],[455,485,465,475,0],[503,537,505,534,0],[485,546,489,522,1],[465,503,480,497,0],[363,428,367,414,1],
  [350,447,351,416,0],
];

const barsB: Bar[] = [
  [150,193,160,180,0],[123,170,124,155,1],[72,140,96,134,0],[122,145,133,138,1],[97,162,99,144,1],[125,168,127,165,0],
  [140,203,152,172,0],[165,213,171,206,0],[200,292,203,272,0],[258,294,262,275,1],[262,303,266,302,0],[278,341,285,339,0],
  [342,413,343,396,0],[346,413,369,398,1],[385,427,388,394,0],[370,410,386,394,0],[407,461,418,430,1],[380,427,385,413,1],
  [390,428,397,414,0],[348,397,376,382,0],[278,345,308,343,1],[325,350,332,341,0],[345,380,354,361,0],[320,352,335,342,0],
  [336,375,340,373,1],[297,404,317,395,0],[331,370,340,354,1],[255,333,262,331,1],[253,280,257,262,0],[244,323,245,309,0],
  [318,350,335,341,1],[330,361,330,336,0],[318,371,346,357,0],[345,430,348,414,0],[380,421,408,421,0],[411,449,428,437,0],
  [372,433,398,430,1],[383,420,410,416,1],[393,435,408,414,0],[420,487,449,483,0],[497,606,500,590,0],[557,607,570,587,1],
  [543,605,567,584,0],[572,682,575,650,0],[547,643,577,637,1],[462,565,474,530,1],[408,487,416,460,1],[411,475,426,465,0],
  [409,453,443,449,1],[474,518,475,513,0],[508,567,521,553,0],[493,562,538,546,1],[475,560,501,542,0],[535,581,547,580,1],
  [428,545,430,543,1],[381,450,404,441,0],[440,490,459,480,0],[500,543,503,510,1],[475,557,478,535,1],[452,500,470,490,1],
  [383,457,392,452,1],[393,430,394,429,0],[400,445,409,415,1],[316,430,363,424,1],[316,375,317,366,1],
];

const bars: Bar[] = [
  ...barsA,
  ...barsB.map(([h, l, t, b, u]): Bar => [h + 300, l + 300, t + 300, b + 300, u]),
];

const barX = (i: number) => 678.7 + i * 5.431;
const priceY = (v: number) => 180 + v / 3;

type Pt = [number, number];
const place = (pts: Pt[], x0: number, y0: number) => pts.map(([x, y]) => `${(x0 + x / 3).toFixed(1)},${(y0 + y / 3).toFixed(1)}`).join(" ");

const slow =
  place([[56,63],[130,65],[210,72],[300,89],[380,100],[460,108],[560,124],[690,150],[800,172],[910,187],[1060,217],[1130,225],[1190,238],[1260,245]], 660, 180) +
  " " +
  place([[330,0],[455,24],[570,42],[680,70],[770,97],[910,130],[1000,148],[1060,158],[1088,161]], 1060, 280);

const mid =
  place([[56,135],[105,129],[150,132],[185,148],[235,181],[270,217],[300,245],[330,260],[350,271],[415,277],[447,278],[480,288],[520,303],[580,321],[610,337],[635,342],[690,375],[712,380],[757,411],[790,421],[815,422],[845,416],[905,420],[945,441],[985,462],[1020,467],[1045,478],[1070,484],[1090,479],[1110,471],[1150,472],[1197,478]], 660, 180) +
  " " +
  place([[30,166],[60,163],[110,156],[140,157],[165,164],[205,183],[235,208],[310,263],[355,290],[380,292],[405,299],[435,303],[455,314],[475,314],[510,306],[535,312],[570,316],[615,338],[665,354],[685,365],[760,438],[775,441],[825,441],[850,450],[905,474],[940,468],[1000,472],[1030,466],[1060,459],[1088,442]], 1060, 280);

const fast =
  place([[53,63],[72,80],[88,88],[105,91],[121,114],[137,127],[154,135],[170,155],[186,182],[202,212],[219,247],[235,271],[251,312],[267,358],[284,382],[300,391],[316,376],[333,380],[349,373],[366,347],[382,329],[398,322],[414,292],[447,295],[463,310],[480,329],[496,347],[512,359],[528,363],[545,359],[561,370],[577,376],[593,384],[610,405],[626,398],[642,408],[658,433],[675,442],[691,459],[707,449],[724,467],[740,490],[757,502],[773,496],[789,488],[805,474],[822,450],[838,412],[854,418],[870,428],[903,428],[919,452],[936,487],[952,513],[968,529],[984,539],[1001,524],[1017,515],[1033,528],[1050,536],[1066,534],[1082,510],[1099,465],[1115,460],[1131,460],[1148,466],[1164,486],[1197,490],[1213,450],[1229,438],[1246,453]], 660, 180) +
  " " +
  place([[62,146],[94,139],[111,127],[127,136],[143,147],[160,165],[176,205],[192,224],[208,250],[225,284],[241,318],[257,336],[274,356],[290,371],[306,383],[322,386],[339,396],[355,389],[371,365],[388,357],[404,354],[420,357],[437,347],[453,362],[469,355],[486,325],[502,307],[518,305],[535,314],[551,322],[567,334],[583,360],[600,383],[616,400],[632,401],[665,406],[681,430],[697,480],[713,510],[730,540],[746,576],[762,576],[778,545],[795,500],[811,487],[828,474],[844,486],[860,505],[877,517],[893,525],[909,534],[926,500],[942,479],[958,481],[974,487],[991,485],[1007,478],[1023,455],[1040,440],[1056,430],[1072,408],[1088,380]], 1060, 280);

const rsi =
  place([[47,148],[80,212],[96,232],[112,239],[128,207],[145,205],[161,223],[177,224],[193,188],[210,179],[226,206],[242,243],[258,252],[275,242],[307,209],[324,170],[340,166],[357,197],[372,201],[389,203],[405,190],[422,221],[438,166],[455,170],[487,138],[503,128],[520,135],[536,177],[552,183],[568,174],[585,175],[601,203],[617,198],[634,198],[650,212],[666,234],[698,263],[715,263],[731,284],[747,299],[764,279],[780,273],[797,234],[813,250],[829,233],[846,201],[862,201],[878,209],[894,170],[911,201],[927,202],[943,220],[976,233],[992,233],[1008,229],[1025,214],[1041,235],[1057,228],[1073,237],[1090,255],[1106,209],[1122,234],[1139,252],[1155,237],[1171,252],[1188,209],[1204,241],[1220,248],[1237,247],[1253,221],[1270,217],[1286,204],[1302,184],[1318,158],[1335,193],[1351,206],[1367,195],[1383,199],[1400,230],[1432,249],[1448,240],[1465,242]], 500, 560) +
  " " +
  place([[11,206],[28,206],[44,229],[60,230],[76,216],[93,176],[109,153],[125,179],[141,188],[158,193],[174,218],[190,198],[207,200],[223,148],[239,169],[256,198],[272,175],[290,178],[305,178],[321,165],[337,193],[353,197],[369,210],[386,236],[402,231],[435,257],[451,275],[467,260],[484,266],[500,267],[516,275],[533,254],[549,264],[565,242],[582,202],[598,215],[614,225],[631,213],[647,213],[663,236],[680,205],[696,169],[712,169],[729,193],[745,205],[761,205],[778,216],[794,241],[810,243],[826,250],[842,225],[859,230],[875,233],[891,263],[907,296],[923,282],[940,285],[956,303],[972,255],[989,206],[1005,183],[1021,202],[1037,192],[1054,217],[1070,232],[1086,225],[1119,227],[1136,175],[1152,180],[1168,196],[1185,206],[1201,195],[1217,189],[1233,158],[1250,175],[1266,168],[1299,133]], 990, 560);

const bears: Pt[] = [[711.5, 214], [945, 295], [1048, 336], [1113.5, 324], [1238.5, 380]];
const bulls: Pt[] = [[939.5, 300], [1026.5, 318], [1064.5, 326], [1227.7, 376], [1401, 440]];

const Signal = styled.text`
  font-family: ${DATA};
  font-size: 9px;
`;

const Ruler = ({ top, bottom }: { top: number; bottom: number }) => (
  <g stroke="#c8c8c8">
    <path d={`M509.500 ${top}V${bottom}M1432 ${top}V${bottom}`} strokeWidth="1" />
    <path d={`M511 ${top + 1}V${bottom}M1430 ${top + 1}V${bottom}`} strokeWidth="2" strokeDasharray="1 2.110" />
    <path d={`M512 ${top + 2}V${bottom}M1429 ${top + 2}V${bottom}`} strokeWidth="4" strokeDasharray="1 14.550" />
  </g>
);

const prices = Array.from({ length: 37 }, (_, i) => `${21200 - i * 200}.00`);

const dates: [number, string][] = [
  [532, "6/23"], [559, "6/30"], [586, "7/7"], [613, "7/14"], [662, "7/28"], [689, "8/4"], [716, "8/11"], [743, "8/18"],
  [771, "8/25"], [798, "9/4"], [820, "9/11"], [868, "9/22"], [895, "9/29"], [945, "10/13"], [993, "10/27"], [1048, "11/10"],
  [1102, "11/24"], [1156, "12/8"], [1184, "12/15"], [1227, "12/29"], [1282, "1/15"], [1309, "1/22"], [1336, "1/29"],
  [1363, "2/5"], [1390, "2/14"],
];

const Chart = () => (
  <ChartBody>
    <Grip />
    <Pane>
      <Plot $first>
        <Canvas viewBox="509 102 924 465" preserveAspectRatio="none" role="img" aria-label="Hang Seng Index daily candles">
          <Ruler top={102} bottom={567} />
          {bars.map(([h, l, t, b, up], i) => (
            <g key={i}>
              <rect x={barX(i) - 0.5} y={priceY(h)} width="1" height={(l - h) / 3} fill="#c8b428" />
              <rect x={barX(i) - 2} y={priceY(t)} width="4" height={Math.max(2, (b - t) / 3)} rx="0.500" fill={up ? "#00f000" : "#ff2626"} />
            </g>
          ))}
          <g fill="none" strokeWidth="1.300" strokeLinejoin="round">
            <polyline points={slow} stroke="#24b6b6" />
            <polyline points={mid} stroke="#c058c8" />
            <polyline points={fast} stroke="#e4e4e4" />
          </g>
          {bears.map(([x, y]) => (
            <g key={x} fill="#ffa8ff">
              <path d={`M${x - 1} ${y}h2v4h2l-3 4-3-4h2z`} />
              <Signal x={x - 3} y={y - 2}>Bear</Signal>
            </g>
          ))}
          {bulls.map(([x, y]) => (
            <g key={x} fill="#14f0ff">
              <path d={`M${x - 1} ${y + 8}h2v-4h2l-3-4-3 4h2z`} />
              <Signal x={x - 3} y={y + 17}>Bull</Signal>
            </g>
          ))}
        </Canvas>
        <PlotTitle $main>Hang Seng Index-HK,D15 (_HSI)</PlotTitle>
      </Plot>
      <Axis $pad="1px 0 8px 4px">
        {prices.map((p) => (
          <span key={p}>{p}</span>
        ))}
        <LastPrice>16742.95</LastPrice>
      </Axis>
    </Pane>
    <Gutter />
    <Pane $height={109}>
      <Plot>
        <Canvas viewBox="509 575 924 103" preserveAspectRatio="none" role="img" aria-label="Relative strength index">
          <Ruler top={575} bottom={678} />
          <path d="M513 592.500H1430M513 654.500H1430" stroke="#d0d0d0" strokeDasharray="2 1" />
          <polyline points={rsi} fill="none" stroke="#d8d81c" strokeWidth="1.200" />
        </Canvas>
        <PlotTitle>Relative Strength Index</PlotTitle>
        <GapNote>No Gaps</GapNote>
      </Plot>
      <Axis $pad="14px 0 6px 4px">
        {["70.00", "60.00", "50.00", "40.00", "30.00", "20.00"].map((p) => (
          <span key={p}>{p}</span>
        ))}
      </Axis>
    </Pane>
    <Gutter />
    <Pane $height={104}>
      <Plot $last>
        <Canvas viewBox="509 686 924 100" preserveAspectRatio="none" role="img" aria-label="Volume">
          <Ruler top={686} bottom={786} />
          <path d="M548 782.500H1425" stroke="#d8d81c" strokeDasharray="2 3.430" />
        </Canvas>
        <PlotTitle>Volume</PlotTitle>
        <GapNote $low>No Gaps</GapNote>
      </Plot>
      <Axis $pad="2px 0 14px 4px">
        <span>Million</span>
        <AxisGroup>
          {["25.00", "20.00", "15.00", "10.00", "5.00"].map((p) => (
            <span key={p}>{p}</span>
          ))}
        </AxisGroup>
      </Axis>
    </Pane>
    <DateAxis>
      <Dates>
        <DateMark $blank $span={23} />
        {dates.map(([x, label], i) => (
          <DateMark key={label} $span={(dates[i + 1]?.[0] ?? 1433) - x}>{label}</DateMark>
        ))}
      </Dates>
      <DayLabel>Day</DayLabel>
    </DateAxis>
  </ChartBody>
);

/* ---------- magnified callouts ---------- */

const Callout = styled.div`
  position: absolute;
  display: flex;
  border: 6px solid #c00000;
  border-radius: 3px;
  background: #fff;
  overflow: hidden;
`;

const TreeCallout = styled(Callout)`
  left: 18px;
  top: 132px;
  width: 264px;
  height: 134px;
  border-width: 5px 6px;
`;

const QuoteCallout = styled(Callout)`
  left: 294px;
  top: 115px;
  width: 384px;
  height: 462px;
`;

const Rail = styled.span<{ $width: number }>`
  width: ${(p) => p.$width}px;
  flex: none;
  border: solid #8d97a5;
  border-width: 0 1px 0 2px;
  background: #dfe5ee;
`;

const BigTree = styled.ul`
  flex: 1;
  font-size: 14px;
`;

const BigRow = styled.li<{ $child?: boolean }>`
  height: 27px;
  display: flex;
  align-items: center;
  padding-left: ${(p) => (p.$child ? 65 : 30)}px;
`;

const BigTwist = styled.span`
  width: 16px;
`;

const Peek = styled.li`
  height: 3px;
  padding-left: 30px;
  overflow: hidden;
  display: flex;
  align-items: flex-end;
`;

const BigTreePad = styled.li`
  height: 6px;
`;

const CalloutTable = styled.div`
  flex: 1;
  min-width: 0;
  overflow: hidden;
  table { margin-top: -14px; }
`;

const Side = styled.div`
  width: 10px;
  flex: none;
  display: flex;
  flex-direction: column;
  align-items: flex-end;
  gap: 6px;
  padding-top: 11px;
  border-left: 1px solid #c2c7d0;
  background: #eef0f5;
`;

const SideThumb = styled.span`
  flex: 1;
  width: 8px;
  border-top: 1px solid #aab2c0;
  border-left: 1px solid #aab2c0;
  background: #fff;
`;

const Space = styled.span<{ $width: number }>`
  width: ${(p) => p.$width}px;
  flex: none;
`;

export default function App() {
  return (
    <>
      <Global />
      <Frame>
        <SystemBar>
          <Icon name="logo" size={13} />
          Aspen for Browser by ThaiQuest
          <SystemButtons>
            <SystemButton aria-label="Minimize window">
              <svg width="9" height="9" viewBox="0 0 9 9"><path d="M0.500 5h8" stroke="#333" /></svg>
            </SystemButton>
            <SystemButton aria-label="Restore window">
              <svg width="9" height="9" viewBox="0 0 9 9"><path d="M0.500 2.500h6v6h-6zM2.500 2V0.500h6v6H7" fill="none" stroke="#333" /></svg>
            </SystemButton>
            <SystemButton aria-label="Close window">
              <svg width="9" height="9" viewBox="0 0 9 9"><path d="M0.500 0.500l8 8M8.500 0.500l-8 8" stroke="#333" /></svg>
            </SystemButton>
          </SystemButtons>
        </SystemBar>
        <BrandBar>
          <Icon name="logo" size={13} />
          {"Aspen for Browser  - BLS01_Basic"}
          <BrandStatus>
            <Icon name="help" size={10} />
            <Icon name="info" size={10} />
            <Icon name="online" size={10} />
          </BrandStatus>
        </BrandBar>
        <MainBar>
          <Tools items={fileTools} />
          {launchers.map(([icon, label]) => (
            <Launch key={label}>
              <Icon name={icon} />
              {label}
            </Launch>
          ))}
          <Launch $menu>
            <Icon name="bell" />
            <Caret />
            Alarms
          </Launch>
          <Divider />
          <Launch $menu $lit>
            <Icon name="palette" />
            <Caret />
            Color Themes
          </Launch>
          <Launch $menu>
            <Icon name="windowsStack" />
            <Caret />
            Windows
          </Launch>
          <Overflow $wide aria-label="More tools">»</Overflow>
        </MainBar>

        <Workspace>
          <Sidebar>
            <SidebarBar>
              <Tools
                items={[
                  { icon: "refresh", label: "Refresh" },
                  { icon: "folder", label: "New folder" },
                  { icon: "edit", label: "Rename" },
                  { icon: "cross", label: "Delete" },
                ]}
              />
              <SidebarClose aria-label="Close panel">×</SidebarClose>
            </SidebarBar>
            <Tree>
              {treeTop.map((n) => (
                <TreeItem key={n.label} node={n} />
              ))}
              {[0, 1, 2, 3, 4, 5, 6].map((n) => (
                <TreeRow key={n} $level={1} aria-hidden="true" />
              ))}
              {treeRest.map((n) => (
                <TreeItem key={n.label} node={n} />
              ))}
            </Tree>
          </Sidebar>

          <ToolWindow>
            <TitleRow icon="tQuote" name="Quote1" />
            <WindowTools>
              <Tools items={quoteTools} />
            </WindowTools>
            <QuoteBody>
              <Clip>
                <QuoteGrid widths={[59, 48, 54, 45, 48, 48, 17]} groups={[["WORLD INDICES", indicesBehind], ["STOCKS", stocks]]} />
              </Clip>
              <Track>
                <Thumb />
                <Arrow $turn={0} />
              </Track>
              <Track $across>
                <Arrow $turn={90} />
                <Thumb $across />
                <Arrow $turn={-90} />
              </Track>
              <Track />
            </QuoteBody>
          </ToolWindow>

          <ToolWindow $fill>
            <TitleRow icon="tChart" name="Chart1" />
            <WindowTools>
              <Tools items={chartTools} />
              <Overflow aria-label="More chart tools">»</Overflow>
            </WindowTools>
            <Chart />
          </ToolWindow>
        </Workspace>

        <TreeCallout>
          <Space $width={1} />
          <Rail $width={4} />
          <BigTree>
            <Peek><Icon name="folder" size={17} /></Peek>
            <BigTreePad />
            <BigRow>
              <BigTwist><Icon name="expanded" size={11} /></BigTwist>
              <TreeLabel $big><Icon name="folderOpen" size={18} />BLS</TreeLabel>
            </BigRow>
            <BigRow $child><TreeLabel $big $picked><Icon name="page" size={16} />BLS01_Basic.agpx</TreeLabel></BigRow>
            <BigRow $child><TreeLabel $big><Icon name="page" size={16} />BLS02_Indicator.agpx</TreeLabel></BigRow>
            <BigRow $child><TreeLabel $big><Icon name="page" size={16} />BLS03_Screener.agpx</TreeLabel></BigRow>
          </BigTree>
          <Rail $width={5} />
        </TreeCallout>

        <QuoteCallout>
          <Space $width={4} />
          <Rail $width={8} />
          <CalloutTable>
            <QuoteGrid big widths={[65, 53, 60, 50, 53, 53, 16]} groups={[["WORLD INDICES", indices]]} />
          </CalloutTable>
          <Side>
            <Arrow $turn={180} />
            <SideThumb />
          </Side>
        </QuoteCallout>
      </Frame>
    </>
  );
}
